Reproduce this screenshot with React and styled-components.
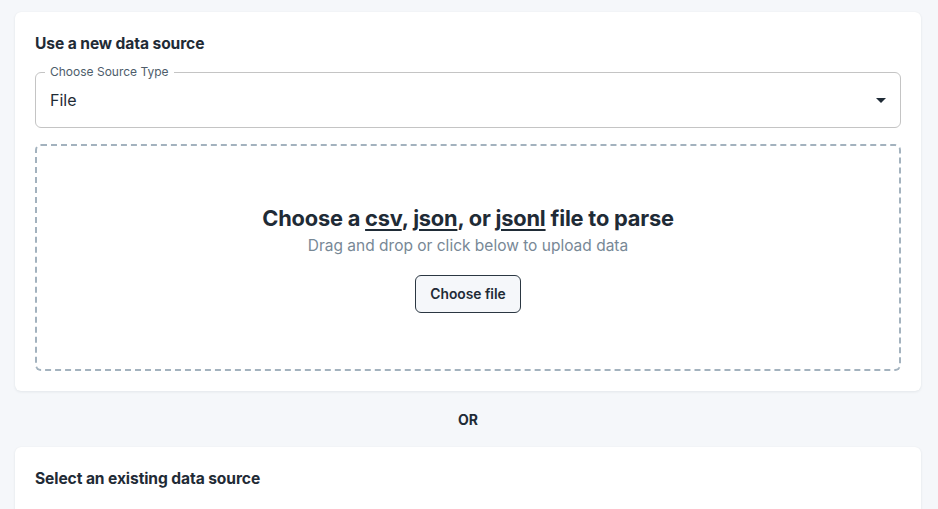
import React from "react";
import styled, { createGlobalStyle } from "styled-components";

const Global = createGlobalStyle`
  html, body { margin: 0; padding: 0; background: #f5f7fa; }
  body { font-family: "Inter", "Liberation Sans", sans-serif; color: #1f2b36; }
  * { box-sizing: border-box; }
`;

const Page = styled.div`
  display: flex;
  flex-direction: column;
  padding: 12px 17px 0 15px;
  min-height: 509px;
  overflow: hidden;
`;

const Card = styled.section`
  background: #fff;
  border-radius: 6px;
  box-shadow: 0 1px 3px rgba(30, 45, 70, 0.08), 0 0 1px rgba(30, 45, 70, 0.06);
  padding: 21px 20px ${(p) => (p.$open ? "20px" : "0")};
  display: flex;
  flex-direction: column;
  gap: 17px;
  min-height: ${(p) => p.$minH || "auto"};
`;

const CardTitle = styled.h2`
  margin: 0;
  font-size: 15.6px;
  line-height: 22px;
  font-weight: 700;
  color: #1f2b36;
  letter-spacing: -0.1px;
`;

const SelectBox = styled.div`
  position: relative;
  height: 56px;
  border: 1px solid #c4c4c4;
  border-radius: 6px;
  display: flex;
  align-items: center;
  justify-content: space-between;
  padding: 0 14px;
`;

const FloatLabel = styled.span`
  position: absolute;
  top: -8px;
  left: 9px;
  padding: 0 5px;
  background: #fff;
  font-size: 12px;
  line-height: 14px;
  color: #4e5d6b;
`;

const SelectValue = styled.span`
  font-size: 16px;
  color: #1f2b36;
`;

const Drop = styled.div`
  margin-top: -1px;
  border: 2px dashed #a3b2be;
  border-radius: 6px;
  height: 227px;
  display: flex;
  flex-direction: column;
  align-items: center;
  justify-content: center;
  padding-top: 2px;
`;

const DropTitle = styled.h3`
  margin: 0;
  font-size: 21.8px;
  line-height: 28px;
  font-weight: 700;
  color: #1f2b36;
  letter-spacing: -0.2px;
  a { color: inherit; text-decoration: underline; text-underline-offset: 3px; text-decoration-thickness: 2px; }
`;

const DropSub = styled.p`
  margin: 4px 0 0;
  font-size: 15.5px;
  line-height: 20px;
  color: #788896;
`;

const Button = styled.button`
  margin-top: 19px;
  height: 38px;
  padding: 0 14px;
  border: 1px solid #2b3742;
  border-radius: 6px;
  background: #f5f7fa;
  font-family: inherit;
  font-size: 13.8px;
  font-weight: 600;
  color: #1f2b36;
`;

const Or = styled.div`
  height: 56px;
  display: flex;
  align-items: center;
  justify-content: center;
  font-size: 14px;
  font-weight: 700;
  color: #1f2b36;
`;

export default function App() {
  return (
    <>
      <Global />
      <Page>
        <Card $open>
          <CardTitle>Use a new data source</CardTitle>
          <SelectBox>
            <FloatLabel>Choose Source Type</FloatLabel>
            <SelectValue>File</SelectValue>
            <svg width="24" height="24" viewBox="0 0 24 24" style={{ marginRight: -7 }}>
              <path d="M7 10l5 5 5-5z" fill="#1f2b36" />
            </svg>
          </SelectBox>
          <Drop>
            <DropTitle>
              Choose a <a>csv</a>, <a>json</a>, or <a>jsonl</a> file to parse
            </DropTitle>
            <DropSub>Drag and drop or click below to upload data</DropSub>
            <Button>Choose file</Button>
          </Drop>
        </Card>
        <Or>OR</Or>
        <Card $minH="80px">
          <CardTitle>Select an existing data source</CardTitle>
        </Card>
      </Page>
    </>
  );
}
